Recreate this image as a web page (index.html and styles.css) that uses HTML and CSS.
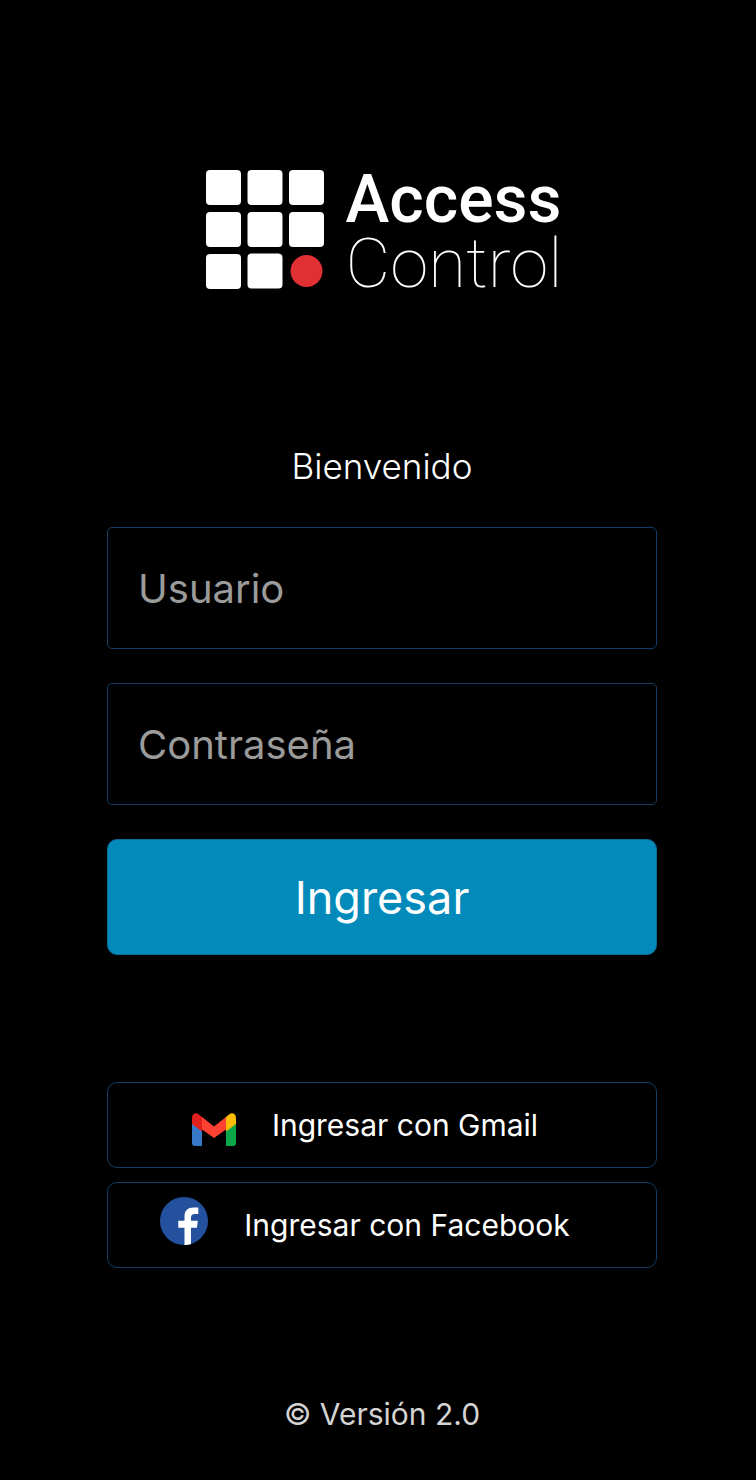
FILE: index.html
```html
<!DOCTYPE html>
<html lang="es">
<head>
  <meta charset="UTF-8">
  <meta name="viewport" content="width=device-width, initial-scale=1.0">
  <title>Access Control</title>
  <link rel="stylesheet" href="styles.css">
</head>
<body>
  <main class="login">
    <h1 class="logo">
      <svg class="logo-mark" viewBox="0 0 118 119" aria-hidden="true">
        <g fill="#fff">
          <rect x="0" y="0" width="35" height="35" rx="4"/>
          <rect x="41.500" y="0" width="35" height="35" rx="4"/>
          <rect x="83" y="0" width="35" height="35" rx="4"/>
          <rect x="0" y="42" width="35" height="35" rx="4"/>
          <rect x="41.500" y="42" width="35" height="35" rx="4"/>
          <rect x="83" y="42" width="35" height="35" rx="4"/>
          <rect x="0" y="84" width="35" height="35" rx="4"/>
          <rect x="41.500" y="83.500" width="35" height="35" rx="4"/>
        </g>
        <circle cx="100.500" cy="101" r="16" fill="#e03034"/>
      </svg>
      <span class="logo-text">
        <span class="logo-access">Access</span>
        <span class="logo-control">Control</span>
      </span>
    </h1>

    <form class="login-form">
      <h2 class="welcome">Bienvenido</h2>
      <input type="text" id="usuario" class="field" placeholder="Usuario" aria-label="Usuario" required>
      <input type="password" id="password" class="field" placeholder="Contraseña" aria-label="Contraseña" required>
      <button type="submit" class="btn-login">Ingresar</button>
    </form>

    <div class="social">
      <button type="button" class="btn-social">
        <svg class="icon-gmail" viewBox="0 -8 44 41" aria-hidden="true">
          <path fill="#3778c8" d="M0 10l10 8v15H3a3 3 0 0 1-3-3z"/>
          <path fill="#0ba84a" d="M34 18l10-8v20a3 3 0 0 1-3 3h-7z"/>
          <path fill="#ff4131" d="M10 4l12 9.500L34 4v12.500L22 25l-12-8.500z"/>
          <path fill="#fbbc04" d="M34 4l3-2.500c3-2.800 7-.8 7 3.500v6l-10 7.500z"/>
          <path fill="#e0201c" d="M0 5c0-4.300 4-6.300 7-3.500L10 4v14.500L0 11z"/>
        </svg>
        Ingresar con Gmail
      </button>
      <button type="button" class="btn-social">
        <svg class="icon-facebook" viewBox="0 0 48 56" aria-hidden="true">
          <circle cx="24" cy="24" r="24" fill="#24519e"/>
          <path fill="#fff" d="M24.500 48V30.800H18.300V23.800H24.500V19.500C24.500 13.500 28 10.600 33.500 10.600H38.300V17H35C32 17 31 18.500 31 20.500V23.800H37.800L37 30.800H31V47C29 47.700 27 48 24.500 48Z"/>
        </svg>
        Ingresar con Facebook
      </button>
    </div>

    <footer class="version">© Versión 2.0</footer>
  </main>
</body>
</html>
```

FILE: styles.css
```css
* {
  box-sizing: border-box;
}

body {
  margin: 0;
  background-color: #000;
  color: #fff;
  font-family: Inter, "Liberation Sans", sans-serif;
}

.login {
  display: flex;
  flex-direction: column;
  padding: 168px 99px 40px 107px;
}

/* Logo */
.logo {
  display: flex;
  justify-content: center;
  align-items: flex-start;
  gap: 22px;
  margin: 0;
  padding-left: 4px;
}

.logo-mark {
  width: 118px;
  height: 119px;
  margin-top: 2px;
}

.logo-text {
  display: flex;
  flex-direction: column;
  font-family: Roboto, sans-serif;
  line-height: 64px;
}

.logo-access {
  font-size: 66px;
  font-weight: 500;
}

.logo-control {
  font-size: 69px;
  font-weight: 100;
}

/* Form */
.login-form {
  display: flex;
  flex-direction: column;
  gap: 34px;
  margin-top: 146px;
}

.welcome {
  margin: 0 0 3px;
  font-size: 35px;
  font-weight: 300;
  line-height: 48px;
  text-align: center;
}

.field {
  width: 100%;
  height: 122px;
  padding: 0 30px;
  border: 1px solid #123e63;
  border-radius: 5px;
  background-color: #000;
  color: #fff;
  font-family: inherit;
  font-size: 40px;
}

.field::placeholder {
  color: #9b9b9b;
  opacity: 1;
}

.btn-login {
  height: 116px;
  border: 1px solid #0a6e98;
  border-radius: 10px;
  background-color: #028abb;
  color: #fff;
  font-family: inherit;
  font-size: 45px;
  cursor: pointer;
}

/* Social buttons */
.social {
  display: flex;
  flex-direction: column;
  gap: 14px;
  margin-top: 127px;
}

.btn-social {
  display: flex;
  justify-content: center;
  align-items: center;
  gap: 36px;
  height: 86px;
  padding: 0 34px 0 0;
  border: 1px solid #123e63;
  border-radius: 10px;
  background-color: #000;
  color: #fff;
  font-family: inherit;
  font-size: 30px;
  cursor: pointer;
}

.icon-gmail {
  width: 44px;
  height: 41px;
}

.icon-facebook {
  width: 48px;
  height: 56px;
}

.version {
  margin-top: 124px;
  color: #d4d4d4;
  font-size: 30px;
  line-height: 44px;
  text-align: center;
}
```
